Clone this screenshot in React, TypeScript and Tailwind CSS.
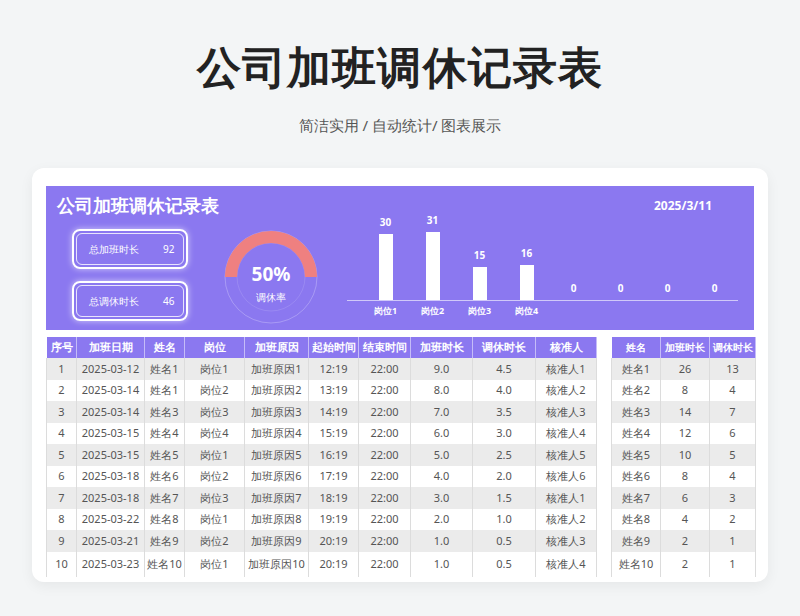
const rows = [
  [1, "2025-03-12", "姓名1", "岗位1", "加班原因1", "12:19", "22:00", "9.0", "4.5", "核准人1"],
  [2, "2025-03-14", "姓名1", "岗位2", "加班原因2", "13:19", "22:00", "8.0", "4.0", "核准人2"],
  [3, "2025-03-14", "姓名3", "岗位3", "加班原因3", "14:19", "22:00", "7.0", "3.5", "核准人3"],
  [4, "2025-03-15", "姓名4", "岗位4", "加班原因4", "15:19", "22:00", "6.0", "3.0", "核准人4"],
  [5, "2025-03-15", "姓名5", "岗位1", "加班原因5", "16:19", "22:00", "5.0", "2.5", "核准人5"],
  [6, "2025-03-18", "姓名6", "岗位2", "加班原因6", "17:19", "22:00", "4.0", "2.0", "核准人6"],
  [7, "2025-03-18", "姓名7", "岗位3", "加班原因7", "18:19", "22:00", "3.0", "1.5", "核准人1"],
  [8, "2025-03-22", "姓名8", "岗位1", "加班原因8", "19:19", "22:00", "2.0", "1.0", "核准人2"],
  [9, "2025-03-21", "姓名9", "岗位2", "加班原因9", "20:19", "22:00", "1.0", "0.5", "核准人3"],
  [10, "2025-03-23", "姓名10", "岗位1", "加班原因10", "20:19", "22:00", "1.0", "0.5", "核准人4"],
];
const heads = ["序号", "加班日期", "姓名", "岗位", "加班原因", "起始时间", "结束时间", "加班时长", "调休时长", "核准人"];
const widths = [30, 68, 40, 60, 64, 50, 52, 62, 63, 61];

const side = [
  ["姓名1", 26, 13], ["姓名2", 8, 4], ["姓名3", 14, 7], ["姓名4", 12, 6], ["姓名5", 10, 5],
  ["姓名6", 8, 4], ["姓名7", 6, 3], ["姓名8", 4, 2], ["姓名9", 2, 1], ["姓名10", 2, 1],
];
const sideWidths = [49, 49, 46];

const bars = [
  { label: "岗位1", v: 30 }, { label: "岗位2", v: 31 }, { label: "岗位3", v: 15 }, { label: "岗位4", v: 16 },
  { label: "", v: 0 }, { label: "", v: 0 }, { label: "", v: 0 }, { label: "", v: 0 },
];

function StatBox({ label, value }: { label: string; value: number }) {
  return (
    <div className="w-[116px] h-[40px] rounded-lg border-2 border-white p-[2px] shadow-[0_0_6px_rgba(255,255,255,0.6)]">
      <div className="h-full rounded-md border border-white/80 flex items-center pl-3 text-[10px] text-white">
        <span className="w-[74px]">{label}</span>
        <span>{value}</span>
      </div>
    </div>
  );
}

export default function App() {
  return (
    <div className="w-[800px] h-[616px] bg-[#f3f5f6] flex flex-col items-center font-['Noto_Sans_CJK_SC',sans-serif] text-[#444]">
      <h1 className="mt-[36px] h-[60px] text-[44px] leading-[60px] font-bold text-[#222] tracking-wide">公司加班调休记录表</h1>
      <p className="mt-[19px] text-[15px] leading-[20px] text-[#555]">简洁实用 / 自动统计/ 图表展示</p>
      <div className="mt-[33px] w-[736px] h-[414px] bg-white rounded-xl shadow-[0_4px_14px_rgba(0,0,0,0.06)] px-[14px] pt-[18px]">
        {/* banner */}
        <div className="h-[144px] bg-[#8b78f0] flex relative">
          <div className="w-[314px] flex flex-col">
            <div className="pl-[11px] pt-[7px] text-[18px] leading-[24px] font-bold text-white">公司加班调休记录表</div>
            <div className="flex mt-[12px]">
              <div className="ml-[26px] flex flex-col gap-[12px]">
                <StatBox label="总加班时长" value={92} />
                <StatBox label="总调休时长" value={46} />
              </div>
              <svg width="110" height="100" viewBox="0 0 110 100" className="ml-[28px] -mt-[4px]">
                <circle cx="55" cy="52" r="46" fill="none" stroke="rgba(255,255,255,0.25)" strokeWidth="1" />
                <circle cx="55" cy="52" r="34" fill="none" stroke="rgba(255,255,255,0.12)" strokeWidth="1" />
                <path d="M 9 52 A 46 46 0 0 1 101 52 L 89 52 A 34 34 0 0 0 21 52 Z" fill="#ef8080" />
                <text x="55" y="56" textAnchor="middle" fill="white" fontSize="19" fontWeight="700">50%</text>
                <text x="55" y="76" textAnchor="middle" fill="white" fontSize="10">调休率</text>
              </svg>
            </div>
          </div>
          <div className="flex-1 flex flex-col pt-[30px]">
            <div className="mr-[16px] h-[85px] flex items-end border-b border-white/60 pl-[15px]">
              {bars.map((b, i) => (
                <div key={i} className="w-[47px] flex flex-col items-center">
                  <span className="text-[10px] font-bold text-white leading-[14px] mb-[5px]">{b.v}</span>
                  <div className="w-[14px] bg-white" style={{ height: b.v * 2.2 }} />
                </div>
              ))}
            </div>
            <div className="flex pl-[15px] mt-[3px]">
              {bars.map((b, i) => (
                <div key={i} className="w-[47px] text-center text-[9px] font-bold text-white">{b.label}</div>
              ))}
            </div>
          </div>
          <div className="absolute right-[42px] top-[11px] text-[12px] font-bold text-white">2025/3/11</div>
        </div>
        {/* tables */}
        <div className="flex mt-[7px] gap-[14px] text-[11px]">
          <table className="border-collapse table-fixed w-[550px]">
            <thead>
              <tr className="h-[21px] bg-[#8b78f0] text-white font-bold">
                {heads.map((h, i) => (
                  <th key={h} style={{ width: widths[i] }} className="border-x border-white/50 font-bold">{h}</th>
                ))}
              </tr>
            </thead>
            <tbody>
              {rows.map((r, ri) => (
                <tr key={ri} className={`h-[21.5px] text-center text-[#555] ${ri % 2 === 0 ? "bg-[#ebebeb]" : "bg-white"} ${ri === 9 ? "h-[25px]" : ""}`}>
                  {r.map((c, ci) => (
                    <td key={ci} className="border-x border-[#dcdcdc] whitespace-nowrap">{c}</td>
                  ))}
                </tr>
              ))}
            </tbody>
          </table>
          <table className="border-collapse table-fixed w-[144px] text-[10px]">
            <thead>
              <tr className="h-[21px] bg-[#8b78f0] text-white">
                {["姓名", "加班时长", "调休时长"].map((h, i) => (
                  <th key={h} style={{ width: sideWidths[i] }} className="border-x border-white/50 font-bold">{h}</th>
                ))}
              </tr>
            </thead>
            <tbody>
              {side.map((r, ri) => (
                <tr key={ri} className={`h-[21.5px] text-center text-[11px] text-[#555] ${ri % 2 === 0 ? "bg-[#ebebeb]" : "bg-white"} ${ri === 9 ? "h-[25px]" : ""}`}>
                  {r.map((c, ci) => (
                    <td key={ci} className="border-x border-[#dcdcdc]">{c}</td>
                  ))}
                </tr>
              ))}
            </tbody>
          </table>
        </div>
      </div>
    </div>
  );
}
